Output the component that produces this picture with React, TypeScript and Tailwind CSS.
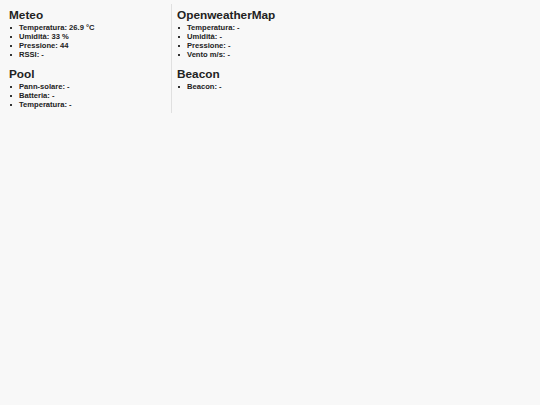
import React from 'react';

type Section = { title: string; items: string[] };

const left: Section[] = [
  { title: 'Meteo', items: ['Temperatura: 26.9 °C', 'Umidità: 33 %', 'Pressione: 44', 'RSSI: -'] },
  { title: 'Pool', items: ['Pann-solare: -', 'Batteria: -', 'Temperatura: -'] },
];

const right: Section[] = [
  { title: 'OpenweatherMap', items: ['Temperatura: -', 'Umidità: -', 'Pressione: -', 'Vento m/s: -'] },
  { title: 'Beacon', items: ['Beacon: -'] },
];

const Block: React.FC<{ s: Section }> = ({ s }) => (
  <div>
    <h2 className="text-[11.8px] leading-[15px] font-bold text-[#222]">{s.title}</h2>
    <ul>
      {s.items.map((it) => (
        <li key={it} className="flex items-center text-[7.6px] leading-[9px] font-bold text-[#222]">
          <span className="ml-[1px] mr-[7px] h-[2px] w-[2px] bg-[#333]" />
          {it}
        </li>
      ))}
    </ul>
  </div>
);

export default function App() {
  return (
    <div className="min-h-[405px] w-full bg-[#f8f8f8] font-['Liberation_Sans',Arial,sans-serif]">
      <div className="flex pt-[4px]">
        <div className="flex w-[172px] flex-col gap-[8px] border-r border-[#e0e0e0] pl-[9px] pt-[4px] pb-[4px]">
          {left.map((s) => (
            <Block key={s.title} s={s} />
          ))}
        </div>
        <div className="flex flex-col gap-[8px] pl-[5px] pt-[4px]">
          {right.map((s) => (
            <Block key={s.title} s={s} />
          ))}
        </div>
      </div>
    </div>
  );
}
